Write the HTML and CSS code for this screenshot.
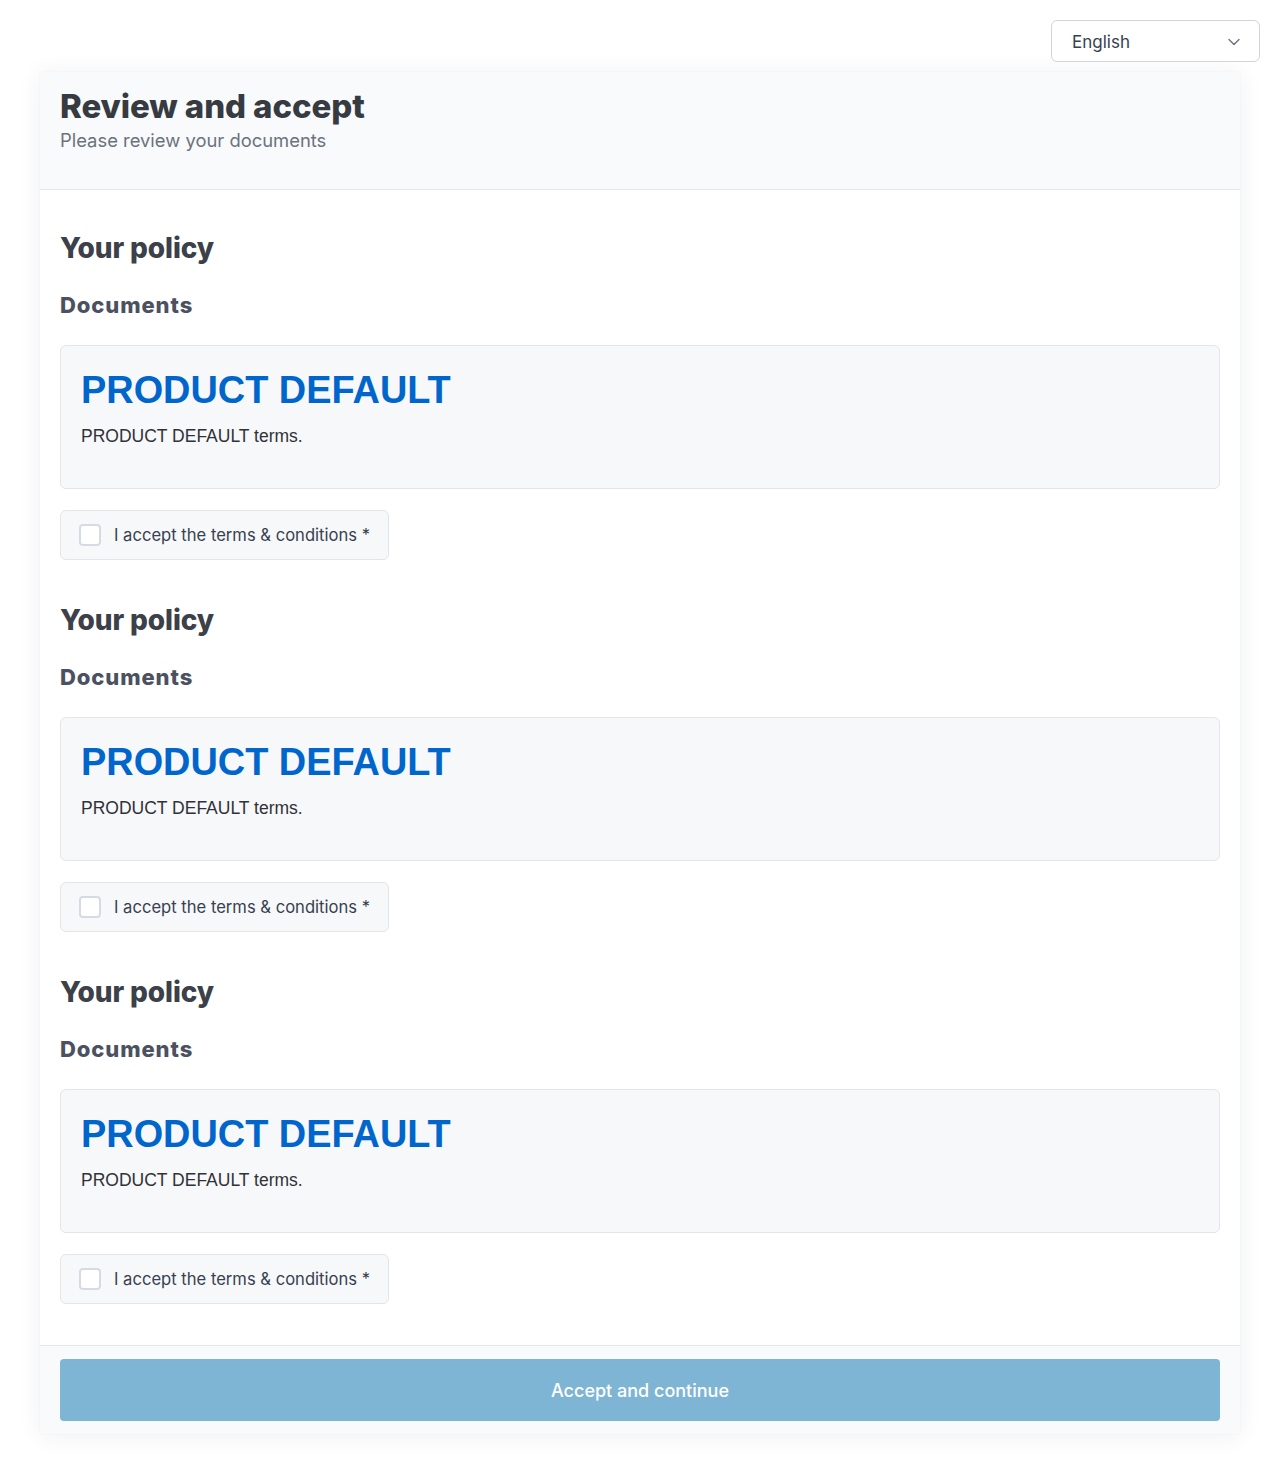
FILE: index.html
```html
<!DOCTYPE html>
<html lang="en">
<head>
<meta charset="utf-8">
<title>Review and accept</title>
<link rel="stylesheet" href="styles.css">
</head>
<body>
<div class="page">
  <div class="topbar">
    <div class="lang-select">
      <span class="lang-label">English</span>
      <svg class="chevron" width="12" height="8" viewBox="0 0 12 8"><path d="M1 1.5 L6 6.5 L11 1.5" fill="none" stroke="#6b7280" stroke-width="1.4" stroke-linecap="round" stroke-linejoin="round"/></svg>
    </div>
  </div>
  <div class="card">
    <div class="card-header">
      <h1 class="title">Review and accept</h1>
      <p class="subtitle">Please review your documents</p>
    </div>
    <div class="card-body">
      <section class="policy">
        <h2 class="policy-title">Your policy</h2>
        <h3 class="docs-title">Documents</h3>
        <div class="doc-box">
          <h1 class="doc-heading">PRODUCT DEFAULT</h1>
          <p class="doc-text">PRODUCT DEFAULT terms.</p>
        </div>
        <label class="accept">
          <span class="checkbox"></span>
          <span class="accept-text">I accept the terms &amp; conditions *</span>
        </label>
      </section>
      <section class="policy">
        <h2 class="policy-title">Your policy</h2>
        <h3 class="docs-title">Documents</h3>
        <div class="doc-box">
          <h1 class="doc-heading">PRODUCT DEFAULT</h1>
          <p class="doc-text">PRODUCT DEFAULT terms.</p>
        </div>
        <label class="accept">
          <span class="checkbox"></span>
          <span class="accept-text">I accept the terms &amp; conditions *</span>
        </label>
      </section>
      <section class="policy">
        <h2 class="policy-title">Your policy</h2>
        <h3 class="docs-title">Documents</h3>
        <div class="doc-box">
          <h1 class="doc-heading">PRODUCT DEFAULT</h1>
          <p class="doc-text">PRODUCT DEFAULT terms.</p>
        </div>
        <label class="accept">
          <span class="checkbox"></span>
          <span class="accept-text">I accept the terms &amp; conditions *</span>
        </label>
      </section>
    </div>
    <div class="card-footer">
      <button class="primary-btn" type="button">Accept and continue</button>
    </div>
  </div>
</div>
</body>
</html>
```

FILE: styles.css
```css
* { box-sizing: border-box; }
html, body { margin: 0; padding: 0; background: #ffffff; }
body {
  font-family: Inter, "Noto Sans", "Liberation Sans", sans-serif;
  color: #374151;
}
.page {
  padding: 20px 20px 40px 40px;
}
.topbar {
  display: flex;
  justify-content: flex-end;
  height: 52px;
}
.lang-select {
  width: 209px;
  height: 42px;
  border: 1px solid #d1d5db;
  border-radius: 6px;
  background: #fff;
  display: flex;
  align-items: center;
  justify-content: space-between;
  padding: 2px 19px 0 20px;
}
.lang-label {
  font-size: 17px;
  color: #374151;
}
.chevron { display: block; }

.card {
  width: 1200px;
  background: #fff;
  border-radius: 4px;
  box-shadow: 0 2px 24px rgba(30, 40, 80, 0.07), 0 0 2px rgba(30, 40, 80, 0.05);
  overflow: hidden;
}
.card-header {
  background: #f9fafb;
  border-bottom: 1px solid #e5e7eb;
  padding: 14px 20px 0;
  height: 118px;
}
.title {
  margin: 0;
  font-size: 33px;
  line-height: 40px;
  font-weight: 800;
  color: #363a41;
  letter-spacing: -0.1px;
}
.subtitle {
  margin: 0;
  font-size: 18.4px;
  line-height: 28px;
  color: #6b7280;
}
.card-body {
  padding: 40px 20px 41px;
  display: flex;
  flex-direction: column;
  gap: 42px;
}
.policy {
  display: flex;
  flex-direction: column;
  align-items: flex-start;
}
.policy-title {
  margin: 0 0 25px;
  font-size: 28px;
  line-height: 36px;
  font-weight: 800;
  color: #3c4049;
  letter-spacing: -0.1px;
}
.docs-title {
  margin: 0 0 26px;
  font-size: 22px;
  line-height: 28px;
  font-weight: 800;
  color: #4b5160;
  letter-spacing: 0.9px;
}
.doc-box {
  align-self: stretch;
  height: 144px;
  background: #f7f8fa;
  border: 1px solid #e3e5e9;
  border-radius: 6px;
  padding: 22px 20px 20px;
  margin-bottom: 21px;
}
.doc-heading {
  margin: 0 0 12px;
  font-family: "Liberation Sans", Arial, sans-serif;
  font-size: 37.9px;
  line-height: 44px;
  font-weight: 700;
  color: #0066cc;
}
.doc-text {
  margin: 0;
  font-family: "Liberation Sans", Arial, sans-serif;
  font-size: 17.5px;
  line-height: 24px;
  color: #2f3237;
}
.accept {
  display: flex;
  align-items: center;
  height: 50px;
  padding: 0 18px;
  background: #f7f8fa;
  border: 1px solid #e3e5e9;
  border-radius: 6px;
  cursor: pointer;
}
.checkbox {
  width: 22px;
  height: 22px;
  border: 2px solid #d5dae5;
  border-radius: 4px;
  background: #fff;
  margin-right: 13px;
}
.accept-text {
  font-size: 16.6px;
  color: #374151;
}
.card-footer {
  background: #f9fafb;
  border-top: 1px solid #e5e7eb;
  padding: 13px 20px 13px;
}
.primary-btn {
  display: block;
  width: 100%;
  height: 62px;
  border: 0;
  border-radius: 4px;
  background: #7eb5d4;
  color: #ffffff;
  font-family: Inter, "Noto Sans", sans-serif;
  font-size: 18px;
  font-weight: 500;
  cursor: default;
}
```
